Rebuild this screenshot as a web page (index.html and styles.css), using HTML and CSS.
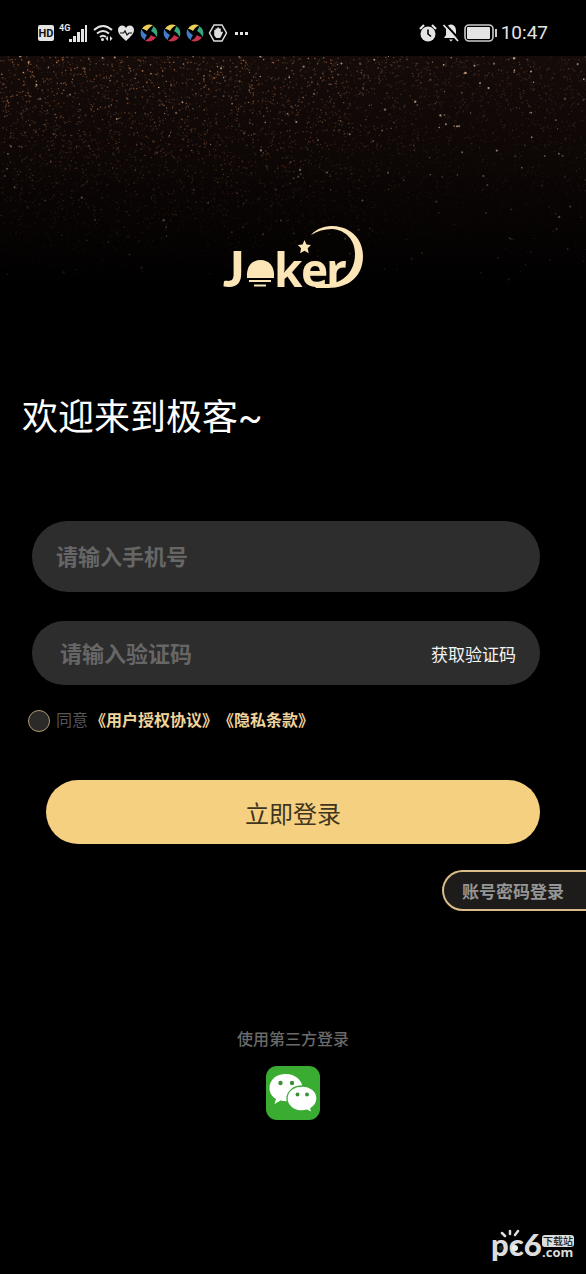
FILE: index.html
```html
<!DOCTYPE html>
<html lang="zh-CN">
<head>
<meta charset="utf-8">
<meta name="viewport" content="width=device-width, initial-scale=1">
<title>极客登录</title>
<link rel="stylesheet" href="styles.css">
</head>
<body>
<header class="status">
  <div class="status-group">
    <svg width="18" height="18" viewBox="0 0 18 18"><rect x="1" y="1" width="16" height="16" rx="2" fill="#e4e4e4"/><text class="hd" x="9" y="13" text-anchor="middle">HD</text></svg>
    <svg width="30" height="20" viewBox="0 0 30 20" fill="#e4e4e4"><text class="net" x="0" y="8">4G</text><path d="M10 16h3v3h-3zM14 13h3v6h-3zM18 9h3v10h-3zM22 6h3v13h-3zM26 2h2v17h-2z"/></svg>
    <svg width="20" height="18" viewBox="0 0 20 18" fill="none" stroke="#e4e4e4" stroke-width="2"><path d="M1 6q9-8 18 0M4 9.500q6-5 12 0M7 13q3-2.500 6 0"/><circle cx="9.500" cy="15.500" r="1.500" fill="#e4e4e4" stroke="none"/><path d="M15 12l-2.500 2.500 2.500 2.500zM17 12l2.500 2.500-2.500 2.500z" fill="#e4e4e4" stroke="none"/></svg>
    <svg width="18" height="18" viewBox="0 0 18 18"><path d="M9 17C5 13 1 10 1 6c0-5 6-6 8-2 2-4 8-3 8 2 0 4-4 7-8 11z" fill="#e4e4e4"/><path d="M3 9h3.500L8 7l2 4 2-2h3" fill="none" stroke="#111" stroke-width="1.200"/></svg>
    <svg class="swirl" width="20" height="20" viewBox="0 0 20 20"><use href="#swirl"/></svg>
    <svg class="swirl" width="20" height="20" viewBox="0 0 20 20"><use href="#swirl"/></svg>
    <svg class="swirl" width="20" height="20" viewBox="0 0 20 20"><use href="#swirl"/></svg>
    <svg width="20" height="20" viewBox="0 0 20 20"><path d="M6 2h8l4.500 8-4.500 8H6l-4.500-8z" fill="none" stroke="#ddd" stroke-width="1.500"/><path d="M6.200 10V7h1.300V5.500h1.800V4.500h1.800v1h1.700V9l1.500-.5.700.8-2 4.200-1 1.500H8.200l-2-2.500z" fill="#ddd"/></svg>
    <svg width="20" height="18" viewBox="0 0 20 18" fill="#e4e4e4"><path d="M3 8h3v3H3zM8 8h3v3H8zM13 8h3v3h-3z"/></svg>
  </div>
  <div class="status-group right">
    <svg width="20" height="20" viewBox="0 0 20 20"><circle cx="10" cy="11" r="7.500" fill="#e4e4e4"/><path d="M2 6l4-4M18 6l-4-4" stroke="#e4e4e4" stroke-width="2.200"/><path d="M10 6.500V11l3 2.500" fill="none" stroke="#000" stroke-width="1.600"/></svg>
    <svg width="20" height="20" viewBox="0 0 20 20"><path d="M10 1.500c4 .5 5 3.500 5 6.500v4l2 3H3l2-3V8c0-3 1-6 5-6.500zM8 16.500h4L10 18.500z" fill="#e4e4e4"/><path d="M4.500 1.500l14 15" stroke="#000" stroke-width="2"/><path d="M2.500 2l14.500 16" stroke="#e4e4e4" stroke-width="1.800"/></svg>
    <svg width="34" height="18" viewBox="0 0 34 18"><rect x="1" y="1" width="28" height="16" rx="4" fill="none" stroke="#ccc" stroke-width="1.600"/><rect x="3" y="3" width="23" height="12" rx="1" fill="#e4e4e4"/><path d="M31 5h2v8h-2z" fill="#ccc"/></svg>
    <time class="clock">10:47</time>
  </div>
  <svg class="defs" width="0" height="0"><defs><g id="swirl">
    <path d="M3 6C5 2 10 .5 14 2.500 11 3.500 9 6 8 8 6 6.500 4.500 6 3 6z" fill="#e9cf5a"/>
    <path d="M14 3c4 2 5.500 7 3.500 11-1-3-3.500-5-5.500-6 1.500-2 2-3.500 2-5z" fill="#35a77c"/>
    <path d="M17 14c-2 4-7 5.500-11 3.500 3-1 5-3.500 6-5.500 2 1.500 3.500 2 5 2z" fill="#c93350"/>
    <path d="M6 17c-4-2-5.500-7-3.500-11 1 3 3.500 5 5.500 6-1.500 2-2 3.500-2 5z" fill="#3f7cc9"/>
  </g></defs></svg>
</header>

<main class="page">
  <canvas class="glitter" aria-hidden="true"></canvas>
  <svg class="logo" role="img" aria-label="Joker" width="144" height="66" viewBox="221 224 144 66">
    <text class="logo-text logo-j" x="223" y="287">J</text>
    <text class="logo-text" x="274" y="287">k</text>
    <text class="logo-text" x="301" y="287">e</text>
    <text class="logo-text" x="326" y="287">r</text>
    <path d="M247 278C246 266 252 260 260.500 260S275 266 274 278z"/>
    <path d="M249 280h22v2h-22zM254 284.500h12v2h-12z"/>
    <path d="M304.500 240l2 4.500 4.500.5-3.300 3.300 1 5-4.200-2.500-4.400 2.500 1-5-3.300-3.300 4.700-.5z"/>
    <path d="M311 235C317 228 325 226 333 226 352 227 363 240 363 256c0 20-14 32-35 32h-12l-3-4h15c16-1 27-13 27-30C355 240 346 230 332 229c-8 0-15 2-21 6z"/>
  </svg>
  <h1 class="welcome">欢迎来到极客~</h1>
  <form class="login" onsubmit="return false">
    <input class="field phone" type="tel" aria-label="手机号" placeholder="请输入手机号">
    <div class="field code">
      <input class="code-input" type="text" aria-label="验证码" placeholder="请输入验证码">
      <button class="get-code" type="button">获取验证码</button>
    </div>
    <div class="agree">
      <input class="agree-check" id="agree" type="checkbox">
      <label for="agree">同意</label>
      <span class="agree-links"><a href="#terms">《用户授权协议》</a><a href="#privacy">《隐私条款》</a></span>
    </div>
    <button class="submit" type="submit">立即登录</button>
  </form>
  <button class="by-password" type="button">账号密码登录</button>
  <section class="third">
    <h2 class="third-title">使用第三方登录</h2>
    <button class="wechat" type="button" aria-label="微信登录">
      <svg width="54" height="54" viewBox="0 0 54 54">
        <rect width="54" height="54" rx="11" fill="#3bac32"/>
        <path d="M20 8C10 8 3.500 14 3.500 22c0 5 2.500 8.500 6.500 11l-1.500 5 6-3.500c2 .5 4 .8 6 .8 9 0 16-6 16-13.500S29 8 20 8z" fill="#fff"/>
        <path d="M36 20c-8.500 0-15 5.500-15 12.500S27.500 45 36 45c2 0 3.500-.3 5-.8l5 2.600-1.200-4.300C48.500 40 51 37 51 32.500 51 25.500 44.500 20 36 20z" fill="#fff" stroke="#3bac32" stroke-width="1.300"/>
        <g fill="#3c8d38"><circle cx="14.500" cy="17" r="2.200"/><circle cx="26" cy="17" r="2.200"/><circle cx="31.500" cy="28.500" r="1.900"/><circle cx="41" cy="28.500" r="1.900"/></g>
      </svg>
    </button>
  </section>
</main>

<svg class="mark" role="img" aria-label="pc6下载站" width="88" height="40" viewBox="0 0 88 40">
  <text class="mark-name" x="1" y="28">pc6</text>
  <g fill="none" stroke="#ddd" stroke-width="2.500" stroke-linecap="round"><path d="M15 8l-3-3M20 6V3M25 7l3-4"/></g>
  <circle cx="11" cy="20" r="2.500" fill="#222"/><circle cx="25" cy="20" r="3" fill="#eee"/>
  <rect x="52" y="7" width="32" height="12" rx="3" fill="#ddd"/>
  <text class="mark-sub" x="68" y="17" text-anchor="middle">下载站</text>
  <text class="mark-com" x="52" y="29">.com</text>
</svg>
<script src="glitter.js"></script>
</body>
</html>
```
FILE: styles.css
```css
* { box-sizing: border-box; }

body {
  margin: 0;
  min-height: 100vh;
  position: relative;
  background: #000;
  color: #fff;
  font-family: Roboto, "Noto Sans CJK SC", sans-serif;
  overflow-x: hidden;
}

button, input { font-family: inherit; }
button { border: 0; padding: 0; background: none; cursor: pointer; }
svg { overflow: visible; }

.status {
  height: 56px;
  padding: 10px 38px 0 37px;
  display: flex;
  align-items: center;
  justify-content: space-between;
}
.status-group { display: flex; align-items: center; gap: 4px; }
.status-group.right { gap: 3px; }
.swirl { margin-right: -1px; }
.defs { position: absolute; }
.clock { font-size: 19px; line-height: 20px; color: #e4e4e4; }
.hd { font: bold 11px Roboto, sans-serif; fill: #111; }
.net { font: bold 9px Roboto, sans-serif; }

.page {
  position: relative;
  display: flex;
  flex-direction: column;
  padding-bottom: 150px;
}
.glitter {
  position: absolute;
  top: 0;
  left: 0;
  width: 100%;
  height: 250px;
  background: linear-gradient(#150c09, #0c0605 45%, #000 95%);
}

.logo { position: relative; align-self: center; margin-top: 168px; fill: #fce6b8; }
.logo-text { font: bold 46px "Open Sans", sans-serif; }
.logo-j { font: 900 50px Lato, sans-serif; }

.welcome {
  margin: 100px 22px 0;
  font-size: 36px;
  line-height: 56px;
  font-weight: 400;
}

.login {
  margin: 75px 46px 0 32px;
  display: flex;
  flex-direction: column;
}
.field {
  width: 100%;
  border: 0;
  border-radius: 36px;
  background: #2d2d2d;
  color: #fff;
}
.phone { height: 71px; padding: 2px 24px 0; font-size: 22px; font-weight: 700; outline: 0; }
.code {
  height: 64px;
  margin-top: 29px;
  padding: 0 24px 0 28px;
  display: flex;
  align-items: center;
}
.code-input {
  flex: 1;
  min-width: 0;
  padding: 2px 0 0;
  border: 0;
  outline: 0;
  background: none;
  color: #fff;
  font-size: 22px;
  font-weight: 700;
}
.phone::placeholder, .code-input::placeholder { color: #666; opacity: 1; }
.get-code { color: #f4f4f4; font-size: 17px; }

.agree {
  margin: 24px 0 0 -4px;
  height: 24px;
  display: flex;
  align-items: center;
  font-size: 16px;
  line-height: 24px;
  color: #555;
  white-space: nowrap;
  text-spacing-trim: space-all;
}
.agree-check {
  appearance: none;
  width: 22px;
  height: 22px;
  margin: 0 6px 0 0;
  border: 1px solid #b09a74;
  border-radius: 50%;
  background: #2b2a28;
}
.agree-check:checked { background: #f5d080; }
.agree-links { margin-left: 2px; }
.agree a { color: #f0d49c; font-weight: 700; text-decoration: none; }

.submit {
  height: 64px;
  margin: 47px 0 0 14px;
  border-radius: 32px;
  background: #f5d080;
  color: #3f3520;
  font-size: 24px;
}

.by-password {
  align-self: flex-end;
  margin-top: 26px;
  height: 41px;
  padding: 0 22px 0 18px;
  border: 2px solid #d9bd88;
  border-right: 0;
  border-radius: 21px 0 0 21px;
  background: #1e1c1a;
  color: #959595;
  font-size: 17px;
  font-weight: 700;
}

.third {
  margin-top: 117px;
  display: flex;
  flex-direction: column;
  align-items: center;
  gap: 14px;
}
.third-title { margin: 0; font-size: 16px; line-height: 24px; font-weight: 500; color: #6a6a6a; }
.wechat { display: flex; }

.mark { position: absolute; right: 8px; bottom: 6px; }
.mark-name { font: 900 31px Lato, sans-serif; fill: #ddd; }
.mark-sub { font: 500 10px "Noto Sans CJK SC", sans-serif; fill: #222; }
.mark-com { font: bold 13px "Open Sans", sans-serif; fill: #ddd; }
```
FILE: glitter.js
```js
(function () {
  var canvas = document.querySelector('.glitter');
  var seed;
  function rnd() {
    seed = (seed + 0x6D2B79F5) | 0;
    var t = Math.imul(seed ^ (seed >>> 15), 1 | seed);
    t = (t + Math.imul(t ^ (t >>> 7), 61 | t)) ^ t;
    return ((t ^ (t >>> 14)) >>> 0) / 4294967296;
  }
  function draw() {
    var w = canvas.width = canvas.clientWidth;
    var h = canvas.height = canvas.clientHeight;
    var c = canvas.getContext('2d');
    var warm = ['180,104,64', '150,90,60', '200,140,95', '120,88,72'];
    seed = 11;
    // Fine dust, densest along the top and left of centre
    for (var i = 0; i < w * 36; i++) {
      var x = rnd() * w;
      var y = rnd() * h;
      var side = 1 - 0.55 * Math.min(1, Math.max(0, x / w - 0.5) * 4);
      var fade = Math.pow(1 - y / h, 1.6) * side;
      var tone = rnd() < side ? warm[Math.floor(rnd() * 4)] : '140,115,98';
      c.fillStyle = 'rgba(' + tone + ',' + (Math.pow(rnd(), 4) * fade) + ')';
      c.fillRect(x, y, 1.3, 1.3);
    }
    // Brighter sparks
    for (var j = 0; j < w * 0.9; j++) {
      var sx = rnd() * w;
      var sy = Math.pow(rnd(), 1.3) * h * 0.9;
      c.fillStyle = 'rgba(228,190,158,' + Math.pow(rnd(), 1.6) * (1 - sy / h) + ')';
      c.beginPath();
      c.arc(sx, sy, 0.5 + rnd() * 0.7, 0, 7);
      c.fill();
    }
  }
  draw();
  window.addEventListener('resize', draw);
})();
```
